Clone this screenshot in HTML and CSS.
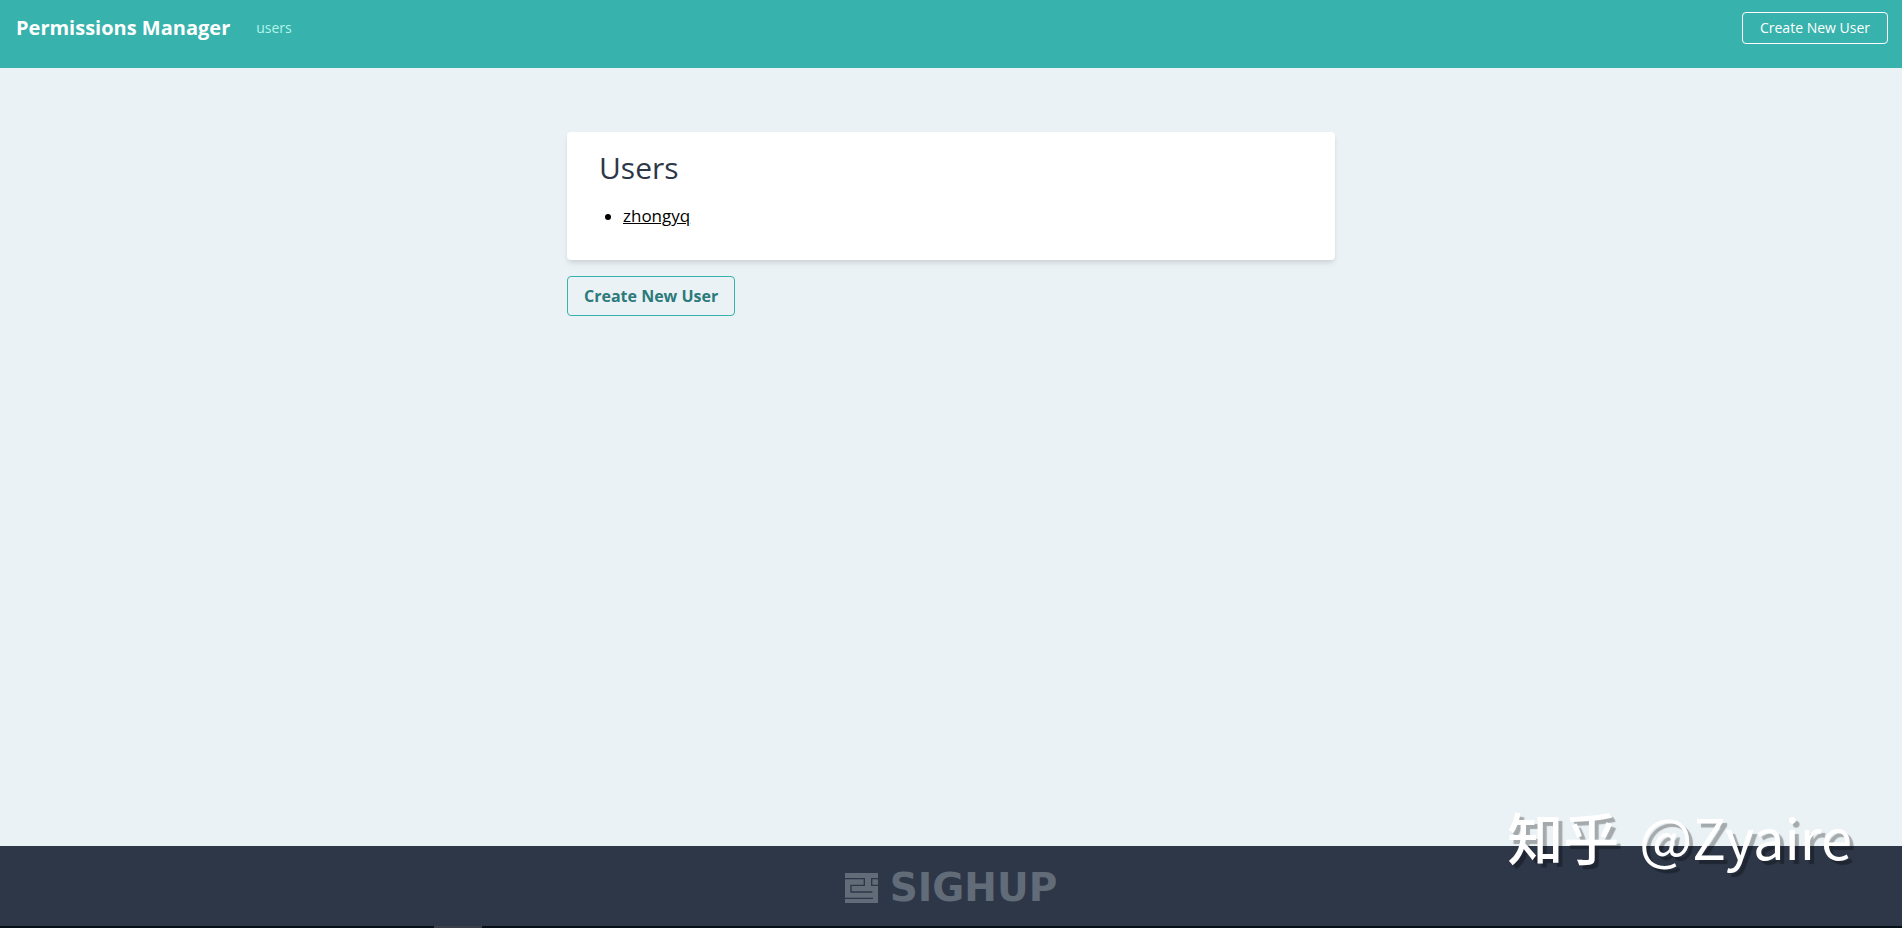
FILE: index.html
```html
<!DOCTYPE html>
<html lang="en">
<head>
<meta charset="utf-8">
<title>Permissions Manager</title>
<link rel="stylesheet" href="styles.css">
</head>
<body>
<header class="navbar">
  <a class="brand" href="#">Permissions Manager</a>
  <nav class="nav"><a class="nav-link" href="#">users</a></nav>
  <button class="nav-button" type="button">Create New User</button>
</header>
<main class="content">
  <section class="card">
    <h1 class="card-title">Users</h1>
    <ul class="user-list">
      <li><a class="user-link" href="#">zhongyq</a></li>
    </ul>
  </section>
  <button class="create-button" type="button">Create New User</button>
</main>
<footer class="footer">
  <svg class="logo-mark" viewBox="0 0 99 90" aria-hidden="true">
    <path class="mark-fill" d="M0 0H99V90H0Z"/>
    <path class="mark-line" d="M0 17H58V37H18V57H82M99 17H80V37H99M0 76H84"/>
  </svg>
  <span class="logo-text">SIGHUP</span>
  <div class="watermark"><span class="watermark-site">知乎</span><span>@Zyaire</span></div>
</footer>
<div class="edge"><div class="edge-mark"></div></div>
</body>
</html>
```
FILE: styles.css
```css
* {
  box-sizing: border-box;
}

body {
  margin: 0;
  min-height: 100vh;
  display: flex;
  flex-direction: column;
  background: #ebf2f6;
  color: #000;
  font-family: "Open Sans", "Noto Sans", sans-serif;
  font-size: 16px;
  line-height: 24px;
}

button {
  font-family: inherit;
  cursor: pointer;
}

.navbar {
  display: flex;
  align-items: center;
  padding: 12px 14px 24px 16px;
  background: #38b2ac;
}

.brand {
  margin-right: 26px;
  color: #fff;
  font-size: 20px;
  font-weight: 700;
  text-decoration: none;
}

.nav {
  flex: 1;
}

.nav-link {
  display: block;
  color: #b2f5ea;
  font-size: 14px;
  text-decoration: none;
}

.nav-button {
  height: 32px;
  padding: 0 17px 2px;
  border: 1px solid #fff;
  border-radius: 4px;
  background: transparent;
  color: #fff;
  font-size: 14px;
}

.content {
  flex: 1;
  width: 100%;
  max-width: 768px;
  margin: 0 auto;
  padding-top: 64px;
}

.card {
  margin-bottom: 16px;
  padding: 16px 32px 32px;
  border-radius: 4px;
  background: #fff;
  box-shadow: 0 4px 6px -1px rgba(0, 0, 0, 0.1), 0 2px 4px -1px rgba(0, 0, 0, 0.06);
}

.card-title {
  margin: 0 0 16px;
  color: #2d3748;
  font-size: 30px;
  font-weight: 400;
  line-height: 40px;
}

.user-list {
  margin: 0;
  padding-left: 24px;
}

.user-link {
  color: #000;
  font-size: 17px;
  text-decoration: underline;
}

.create-button {
  height: 40px;
  padding: 0 16px;
  border: 1px solid #38b2ac;
  border-radius: 4px;
  background: transparent;
  color: #2c7a7b;
  font-size: 16px;
  font-weight: 700;
}

.footer {
  position: relative;
  display: flex;
  align-items: center;
  justify-content: center;
  gap: 12px;
  height: 80px;
  padding-top: 3px;
  background: #2d3748;
  color: #626b78;
}

.logo-mark {
  width: 33px;
  height: 30px;
}

.mark-fill {
  fill: #626b78;
}

.mark-line {
  fill: none;
  stroke: #2d3748;
  stroke-width: 4;
}

.logo-text {
  font-family: "DejaVu Sans", sans-serif;
  font-size: 39px;
  font-weight: 700;
  line-height: 48px;
}

.watermark {
  position: absolute;
  right: 50px;
  bottom: 50px;
  display: flex;
  gap: 20px;
  color: #fff;
  font-family: "Noto Sans CJK SC", sans-serif;
  font-size: 56px;
  line-height: 80px;
  text-shadow: 4px 4px 1px rgba(0, 0, 0, 0.3);
}

.watermark-site {
  font-weight: 500;
}

.edge {
  height: 2px;
  padding-left: 434px;
  background: #060e18;
}

.edge-mark {
  width: 48px;
  height: 2px;
  background: #3a3f4a;
}
```
